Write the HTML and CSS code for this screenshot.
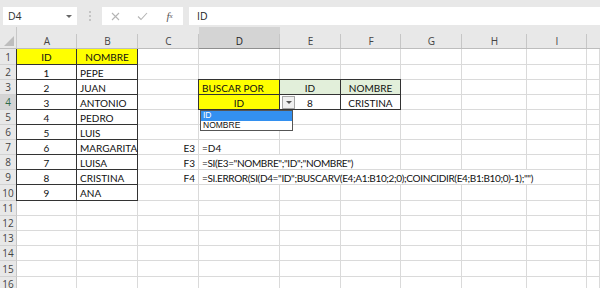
FILE: index.html
```html
<!DOCTYPE html>
<html>
<head>
<meta charset="utf-8">
<link rel="stylesheet" href="styles.css">
</head>
<body>
<div class="fbar">
  <div class="namebox"><span>D4</span><span class="caret"></span></div>
  <div class="grip"><svg width="4" height="12" viewBox="0 0 4 12"><circle cx="2" cy="2" r="1" fill="#b9b9b9"/><circle cx="2" cy="6" r="1" fill="#b9b9b9"/><circle cx="2" cy="10" r="1" fill="#b9b9b9"/></svg></div>
  <div class="fbtns">
    <span class="fb"><svg width="9" height="9" viewBox="0 0 9 9"><path d="M1 1L8 8M8 1L1 8" stroke="#b4b4b4" stroke-width="1.1" fill="none"/></svg></span>
    <span class="fb"><svg width="11" height="9" viewBox="0 0 11 9"><path d="M1 4.5L4 7.5L10 1" stroke="#b4b4b4" stroke-width="1.1" fill="none"/></svg></span>
    <span class="fb fx"><i>f</i><sub>x</sub></span>
  </div>
  <div class="finput">ID</div>
</div>
<div class="sheet">
  <div class="corner"><span class="tri"></span></div>
  <div class="h">A</div><div class="h">B</div><div class="h">C</div><div class="h sel">D</div><div class="h">E</div><div class="h">F</div><div class="h">G</div><div class="h">H</div><div class="h">I</div><div class="h last"></div>

  <div class="r">1</div><div class="c t tl tt y ctr">ID</div><div class="c t tt y ctr">NOMBRE</div><div class="c"></div><div class="c"></div><div class="c"></div><div class="c"></div><div class="c"></div><div class="c"></div><div class="c"></div><div class="c"></div>
  <div class="r">2</div><div class="c t tl ctr">1</div><div class="c t">PEPE</div><div class="c"></div><div class="c"></div><div class="c"></div><div class="c"></div><div class="c"></div><div class="c"></div><div class="c"></div><div class="c"></div>
  <div class="r">3</div><div class="c t tl ctr">2</div><div class="c t">JUAN</div><div class="c"></div><div class="c t tl tt y">BUSCAR POR</div><div class="c t tt g ctr">ID</div><div class="c t tt g ctr">NOMBRE</div><div class="c"></div><div class="c"></div><div class="c"></div><div class="c"></div>
  <div class="r rsel">4</div><div class="c t tl ctr">3</div><div class="c t">ANTONIO</div><div class="c"></div><div class="c t tl y ctr">ID</div><div class="c t ctr">8</div><div class="c t ctr">CRISTINA</div><div class="c"></div><div class="c"></div><div class="c"></div><div class="c"></div>
  <div class="r">5</div><div class="c t tl ctr">4</div><div class="c t">PEDRO</div><div class="c"></div><div class="c"></div><div class="c"></div><div class="c"></div><div class="c"></div><div class="c"></div><div class="c"></div><div class="c"></div>
  <div class="r">6</div><div class="c t tl ctr">5</div><div class="c t">LUIS</div><div class="c"></div><div class="c"></div><div class="c"></div><div class="c"></div><div class="c"></div><div class="c"></div><div class="c"></div><div class="c"></div>
  <div class="r">7</div><div class="c t tl ctr">6</div><div class="c t">MARGARITA</div><div class="c rt">E3</div><div class="c">=D4</div><div class="c"></div><div class="c"></div><div class="c"></div><div class="c"></div><div class="c"></div><div class="c"></div>
  <div class="r">8</div><div class="c t tl ctr">7</div><div class="c t">LUISA</div><div class="c rt">F3</div><div class="c fm span3">=SI(E3="NOMBRE";"ID";"NOMBRE")</div><div class="c"></div><div class="c"></div><div class="c"></div><div class="c"></div>
  <div class="r">9</div><div class="c t tl ctr">8</div><div class="c t">CRISTINA</div><div class="c rt">F4</div><div class="c fm span6">=SI.ERROR(SI(D4="ID";BUSCARV(E4;A1:B10;2;0);COINCIDIR(E4;B1:B10;0)-1);"")</div><div class="c"></div>
  <div class="r">10</div><div class="c t tl ctr">9</div><div class="c t">ANA</div><div class="c"></div><div class="c"></div><div class="c"></div><div class="c"></div><div class="c"></div><div class="c"></div><div class="c"></div><div class="c"></div>
  <div class="r">11</div><div class="c"></div><div class="c"></div><div class="c"></div><div class="c"></div><div class="c"></div><div class="c"></div><div class="c"></div><div class="c"></div><div class="c"></div><div class="c"></div>
  <div class="r">12</div><div class="c"></div><div class="c"></div><div class="c"></div><div class="c"></div><div class="c"></div><div class="c"></div><div class="c"></div><div class="c"></div><div class="c"></div><div class="c"></div>
  <div class="r">13</div><div class="c"></div><div class="c"></div><div class="c"></div><div class="c"></div><div class="c"></div><div class="c"></div><div class="c"></div><div class="c"></div><div class="c"></div><div class="c"></div>
  <div class="r">14</div><div class="c"></div><div class="c"></div><div class="c"></div><div class="c"></div><div class="c"></div><div class="c"></div><div class="c"></div><div class="c"></div><div class="c"></div><div class="c"></div>
  <div class="r">15</div><div class="c"></div><div class="c"></div><div class="c"></div><div class="c"></div><div class="c"></div><div class="c"></div><div class="c"></div><div class="c"></div><div class="c"></div><div class="c"></div>
  <div class="r">16</div><div class="c"></div><div class="c"></div><div class="c"></div><div class="c"></div><div class="c"></div><div class="c"></div><div class="c"></div><div class="c"></div><div class="c"></div><div class="c"></div>

  <div class="ddbtn"><span class="ddcaret"></span></div>
  <div class="ddlist">
    <div class="ddi on">ID</div>
    <div class="ddi">NOMBRE</div>
  </div>
</div>
</body>
</html>
```

FILE: styles.css
```css
* { box-sizing: border-box; margin: 0; padding: 0; }
html, body { width: 600px; height: 288px; overflow: hidden; background: #fff; }
body { font-family: Lato, "Liberation Sans", sans-serif; font-size: 10px; color: #111; }

.fbar { height: 27px; background: #e8e8e8; display: flex; align-items: flex-start; padding: 7px 0 0 3px; }
.namebox { width: 74px; height: 18px; background: #fff; display: flex; align-items: center; justify-content: space-between; padding: 0 5px 0 5px; font-family: "Open Sans", sans-serif; font-size: 10.5px; color: #333; }
.caret { width: 0; height: 0; border-left: 3px solid transparent; border-right: 3px solid transparent; border-top: 3px solid #666; }
.grip { width: 25px; height: 18px; display: flex; align-items: center; justify-content: center; }
.fbtns { width: 81px; height: 18px; background: #fff; display: flex; align-items: center; }
.fb { width: 27px; height: 18px; display: flex; align-items: center; justify-content: center; }
.fx { font-family: "Liberation Serif", serif; font-size: 11px; color: #555; }
.fx i { font-style: italic; }
.fx sub { font-size: 7px; vertical-align: -2px; font-style: italic; }
.finput { flex: 1; height: 18px; background: #fff; margin-left: 6px; padding-left: 8px; display: flex; align-items: center; font-family: "Open Sans", sans-serif; font-size: 10.5px; color: #222; }

.sheet { position: relative; display: grid; grid-template-columns: 17px 60px 61px 61px 81px 61px 60px 61px 65px 60px 1fr; grid-template-rows: 22px 16px repeat(8, 15px) 16px repeat(4, 15px) 16px 15px; background: #fff; }

.corner { background: #e8e8e8; border-bottom: 1px solid #bdbdbd; border-right: 1px solid #c8c8c8; position: relative; }
.tri { position: absolute; right: 2px; bottom: 2px; width: 0; height: 0; border-left: 10px solid transparent; border-bottom: 10px solid #bdbdbd; }
.h { background: #e8e8e8; border-bottom: 1px solid #bdbdbd; position: relative; display: flex; align-items: flex-end; justify-content: center; line-height: 13px; font-family: "Open Sans", sans-serif; font-size: 10px; color: #444; }
.h::after { content: ""; position: absolute; right: 0; bottom: 0; width: 1px; height: 14px; background: #c6c6c6; }
.h.sel { background: #d4d4d4; border-bottom: 1px solid #8f8f8f; color: #222; }
.h.last::after { display: none; }

.r { background: #e8e8e8; border-right: 1px solid #c6c6c6; border-bottom: 1px solid #d2d2d2; display: flex; align-items: center; justify-content: center; font-family: "Open Sans", sans-serif; font-size: 10px; color: #444; }
.r.rsel { background: #d4d4d4; border-right: 1px solid #2e7d4f; color: #2e6b46; }

.c { border-right: 1px solid #dadada; border-bottom: 1px solid #dadada; display: flex; align-items: center; padding: 1px 3px 0 3px; white-space: nowrap; }
.c.ctr { justify-content: center; }
.c.rt { justify-content: flex-end; }
.c.fm { letter-spacing: -0.35px; }
.c.t { border-right-color: #333; border-bottom-color: #333; }
.c.tl { box-shadow: -1px 0 0 #333; }
.c.tt { box-shadow: 0 -1px 0 #333; }
.c.tl.tt { box-shadow: -1px 0 0 #333, 0 -1px 0 #333, -1px -1px 0 #333; }
.c.y { background: #ffff00; }
.c.g { background: #e2efda; }
.span3 { grid-column: span 3; }
.span6 { grid-column: span 6; }

.ddbtn { position: absolute; left: 282px; top: 69px; width: 13px; height: 13px; background: #f0f0f0; border: 1px solid #a6a6a6; display: flex; align-items: center; justify-content: center; }
.ddcaret { width: 0; height: 0; border-left: 3px solid transparent; border-right: 3px solid transparent; border-top: 3px solid #555; }
.ddlist { position: absolute; left: 200px; top: 83px; width: 93px; height: 21px; background: #fff; border: 1px solid #555; font-family: "Liberation Sans", sans-serif; font-size: 8.5px; color: #111; }
.ddi { height: 9.5px; line-height: 9.5px; padding-left: 2px; }
.ddi.on { background: #3390f0; color: #fff; }
```
